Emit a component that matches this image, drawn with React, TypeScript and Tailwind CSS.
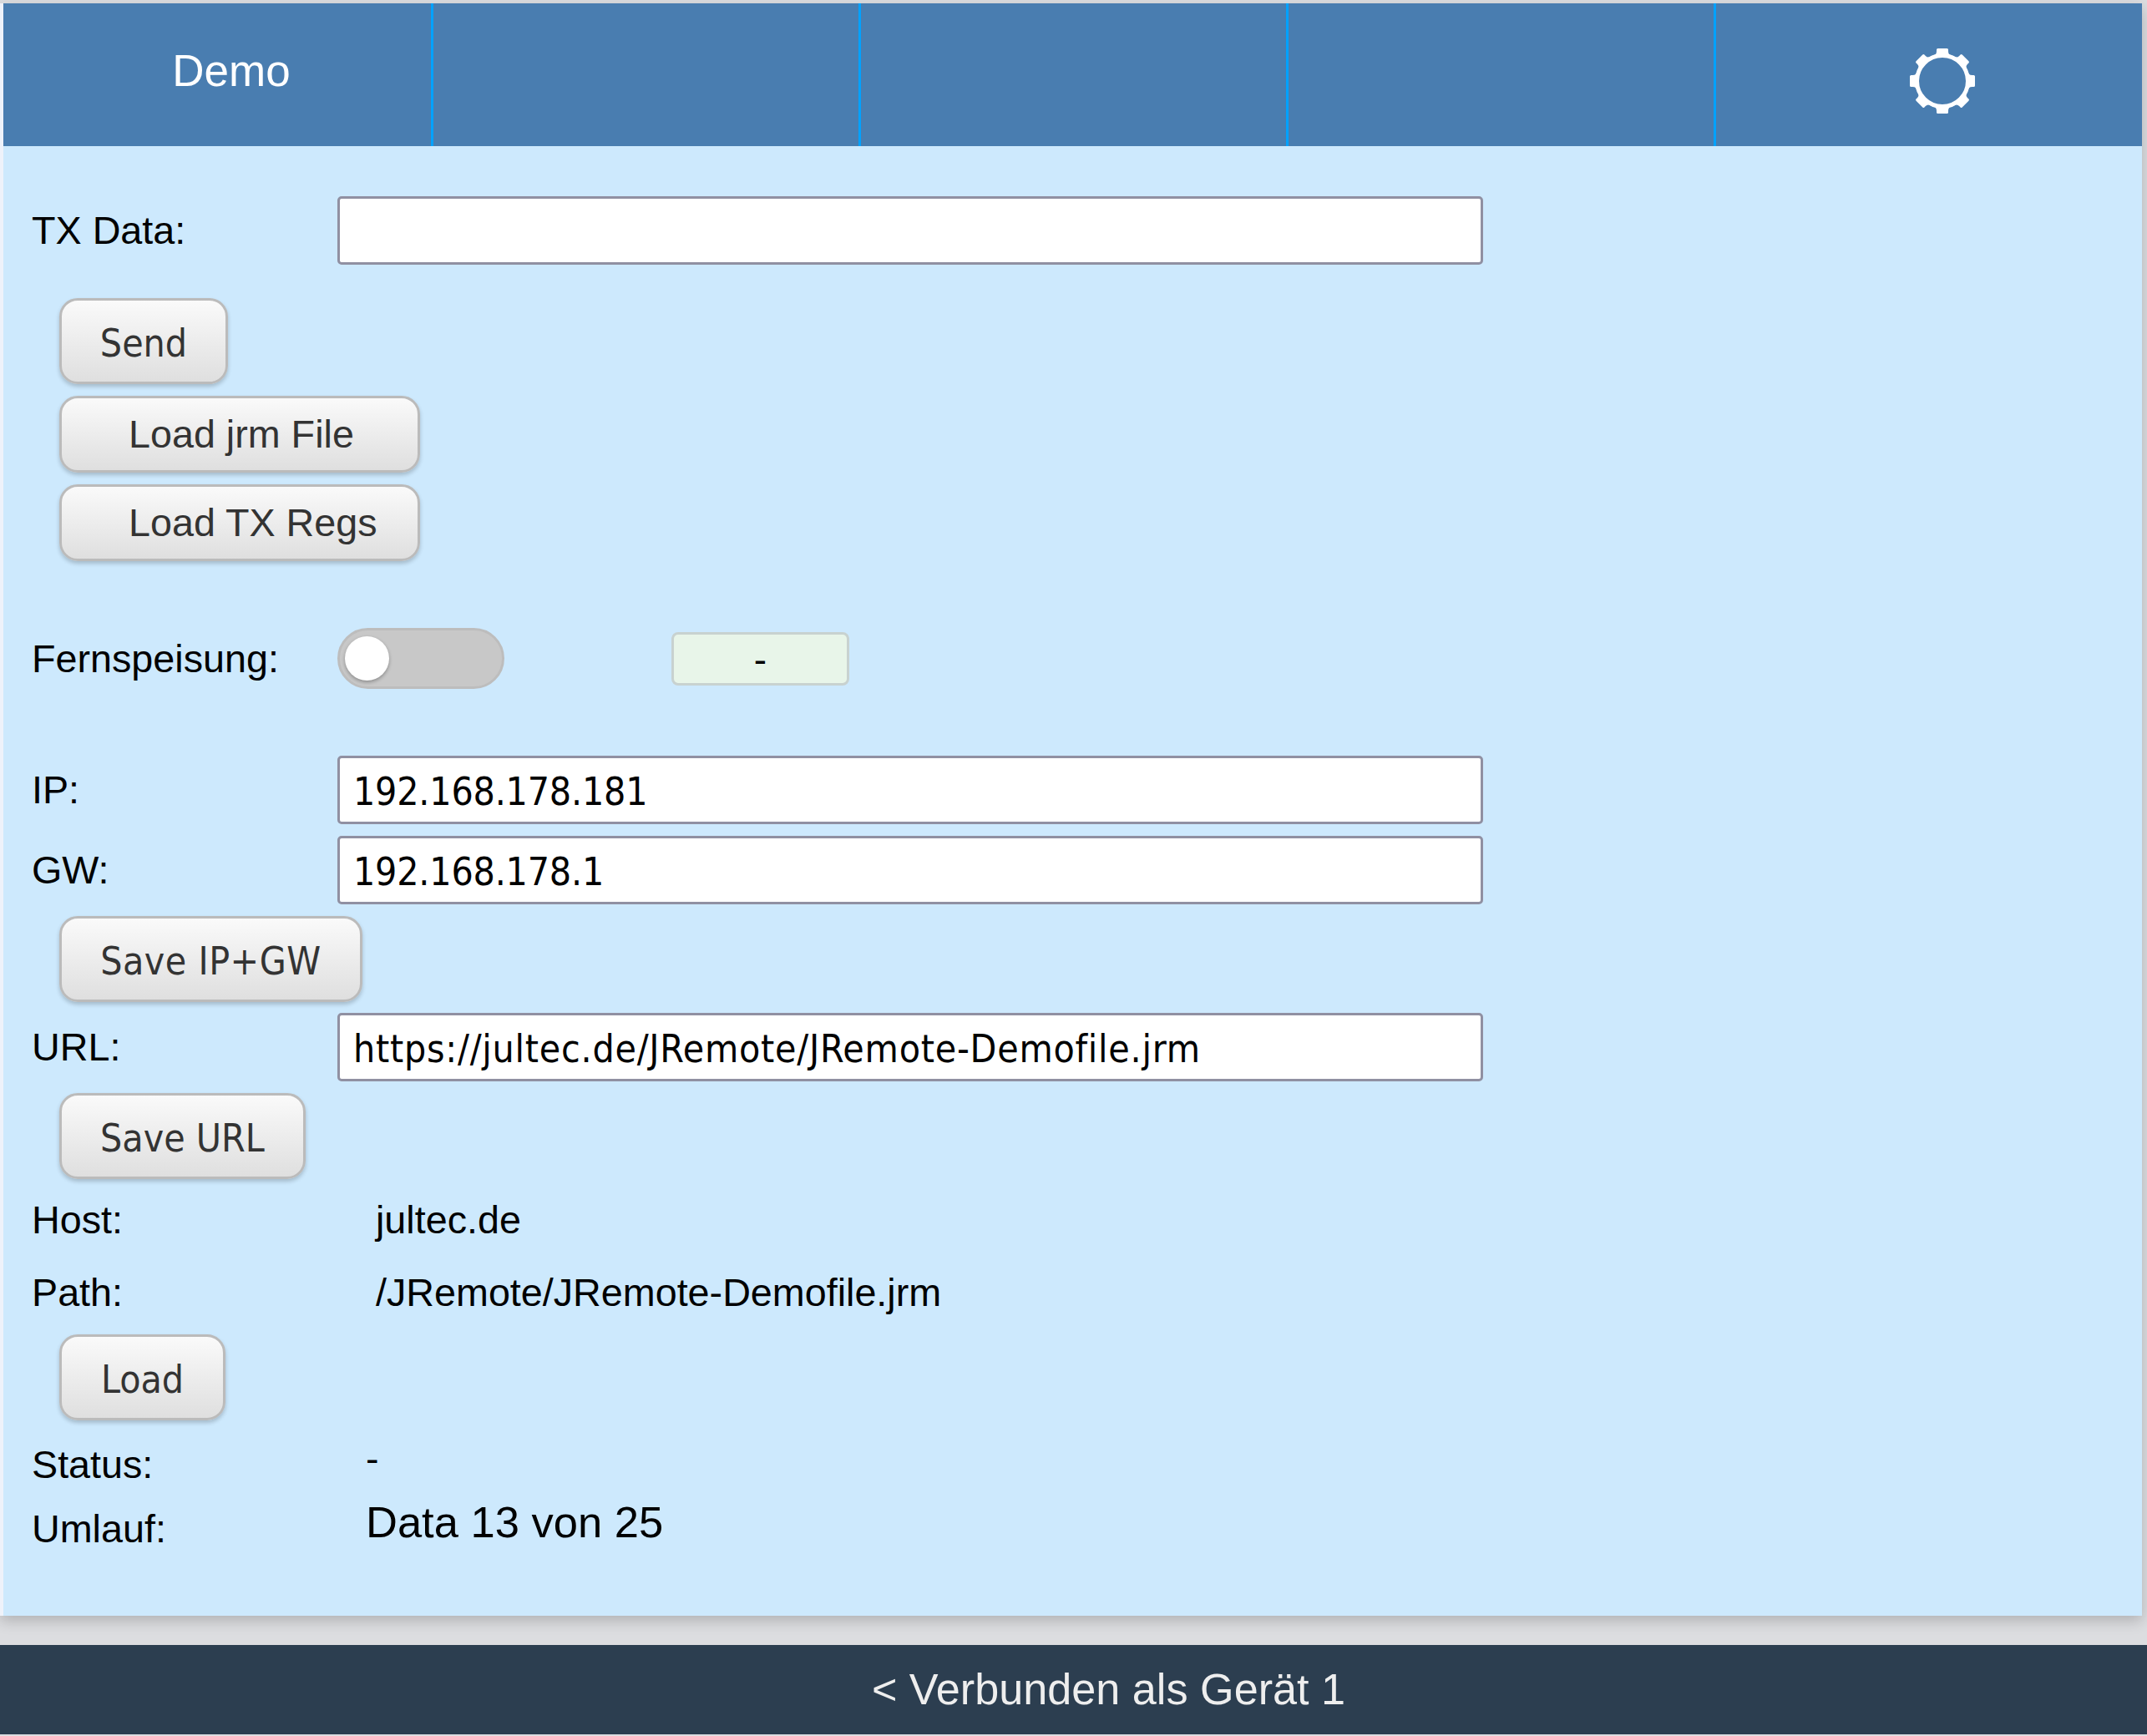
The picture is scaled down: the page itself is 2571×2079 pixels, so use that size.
import React from "react";

const labelFont = "font-['Liberation_Sans',Arial,sans-serif]";
const inputFont = "font-['DejaVu_Sans_Condensed','DejaVu_Sans',sans-serif]";

function GearIcon() {
  const angles = [0, 45, 90, 135, 180, 225, 270, 315];
  return (
    <svg width="78" height="78" viewBox="-39 -39 78 78" fill="white">
      <circle cx="0" cy="0" r="30.5" fill="none" stroke="white" strokeWidth="5" />
      {angles.map((a) => (
        <path
          key={a}
          transform={`rotate(${a})`}
          d="M-12 -30.5 Q-7 -31 -7 -35.5 L-7 -37.5 Q-7 -39 -5.5 -39 L5.5 -39 Q7 -39 7 -37.5 L7 -35.5 Q7 -31 12 -30.5 Z"
        />
      ))}
    </svg>
  );
}

function Field({ label, value, className, textClass }: { label: string; value: string; className: string; textClass?: string }) {
  return (
    <div className={`flex items-center h-[82px] ${className}`}>
      <label className="w-[366px] shrink-0 text-[46.7px] leading-none text-black">{label}</label>
      <div
        className={`w-[1372px] h-[82px] flex items-center pl-[16px] pt-[4px] bg-white border-[3px] border-[#9090a2] rounded-[5px] text-[46px] text-black ${inputFont} ${textClass ?? ""}`}
      >
        {value}
      </div>
    </div>
  );
}

function Btn({ children, className }: { children: React.ReactNode; className: string }) {
  return (
    <button
      className={`flex items-center ml-[33px] border-[3px] border-[#bbbbbb] rounded-[22px] bg-gradient-to-b from-[#fafafa] to-[#dfdfdf] shadow-[0_3px_5px_rgba(0,0,0,0.2)] text-[#333333] leading-none ${className}`}
    >
      {children}
    </button>
  );
}

function InfoRow({ label, children, className }: { label: string; children: React.ReactNode; className: string }) {
  return (
    <div className={`flex items-center h-[60px] text-[46.7px] text-black ${className}`}>
      <span className="w-[400px] shrink-0 leading-none">{label}</span>
      {children}
    </div>
  );
}

export default function App() {
  return (
    <div className={`w-[2571px] h-[2079px] overflow-hidden flex flex-col pt-[4px] bg-[#dcdde0] ${labelFont}`}>
      <div className="mr-[6px] h-[1931px] shrink-0 border-l-[4px] border-[#eef2fa] bg-[#cde9fd] shadow-[0_6px_16px_rgba(0,0,0,0.2)]">
        {/* Header */}
        <div className="flex h-[171px] bg-[#497db0]">
          <div className="w-[515px] border-r-[3px] border-[#00a2ff] flex justify-center pl-[34px] pt-[54px] text-[53px] leading-none text-white h-full">
            Demo
          </div>
          <div className="w-[512px] border-r-[3px] border-[#00a2ff]" />
          <div className="w-[512px] border-r-[3px] border-[#00a2ff]" />
          <div className="w-[512px] border-r-[3px] border-[#00a2ff]" />
          <div className="flex-1 flex justify-center pl-[32px] pt-[54px]">
            <div className="h-[78px]">
              <GearIcon />
            </div>
          </div>
        </div>

        {/* Form */}
        <div className="flex flex-col items-start pl-[34px]">
          <Field label="TX Data:" value="" className="mt-[60px]" />
          <Btn className={`mt-[40px] w-[202px] h-[103px] justify-center pt-[4px] text-[46px] ${inputFont}`}>Send</Btn>
          <Btn className="mt-[14px] w-[432px] h-[92px] pl-[80px] text-[46.7px]">Load jrm File</Btn>
          <Btn className="mt-[14px] w-[432px] h-[92px] pl-[80px] text-[46.7px]">Load TX Regs</Btn>

          <div className="mt-[80px] flex items-center h-[73px]">
            <span className="w-[366px] shrink-0 pt-[2px] text-[46.7px] leading-none text-black">Fernspeisung:</span>
            <div className="w-[200px] h-[73px] rounded-full bg-[#c8c8c8] border-[3px] border-[#bdbdbd] flex items-center pl-[6px]">
              <div className="w-[53px] h-[53px] rounded-full bg-white shadow-[0_2px_4px_rgba(0,0,0,0.3)]" />
            </div>
            <div className="ml-[200px] w-[213px] h-[64px] flex items-center justify-center pt-[3px] rounded-[8px] bg-[#e8f5e9] border-[3px] border-[#c8d2d0] text-[46px] leading-none text-black">
              -
            </div>
          </div>

          <Field label="IP:" value="192.168.178.181" className="mt-[80px]" textClass="tracking-[-0.2px]" />
          <Field label="GW:" value="192.168.178.1" className="mt-[14px]" textClass="tracking-[-0.2px]" />
          <Btn className={`mt-[14px] w-[363px] h-[103px] justify-center pt-[4px] text-[46px] tracking-[0.5px] ${inputFont}`}>Save IP+GW</Btn>
          <Field label="URL:" value="https://jultec.de/JRemote/JRemote-Demofile.jrm" className="mt-[13px]" textClass="tracking-[0.75px]" />
          <Btn className={`mt-[14px] w-[295px] h-[103px] justify-center pt-[4px] text-[46px] ${inputFont}`}>Save URL</Btn>

          <InfoRow label="Host:" className="mt-[19px]">
            <span className="ml-[12px] leading-none">jultec.de</span>
          </InfoRow>
          <InfoRow label="Path:" className="mt-[27px]">
            <span className="ml-[12px] leading-none">/JRemote/JRemote-Demofile.jrm</span>
          </InfoRow>
          <Btn className={`mt-[20px] w-[199px] h-[103px] justify-center pt-[4px] text-[46px] ${inputFont}`}>Load</Btn>
          <InfoRow label="Status:" className="mt-[23px]">
            <span className="pb-[14px] leading-none">-</span>
          </InfoRow>
          <InfoRow label="Umlauf:" className="mt-[17px]">
            <span className="pb-[16px] text-[52.5px] leading-none">Data 13 von 25</span>
          </InfoRow>
        </div>
      </div>

      {/* Footer */}
      <div className="mt-[35px] h-[107px] shrink-0 bg-[#2c3e50] flex items-center justify-center pl-[84px] text-[52.2px] leading-none text-[#eeeeee]">
        &lt; Verbunden als Gerät 1
      </div>
    </div>
  );
}
